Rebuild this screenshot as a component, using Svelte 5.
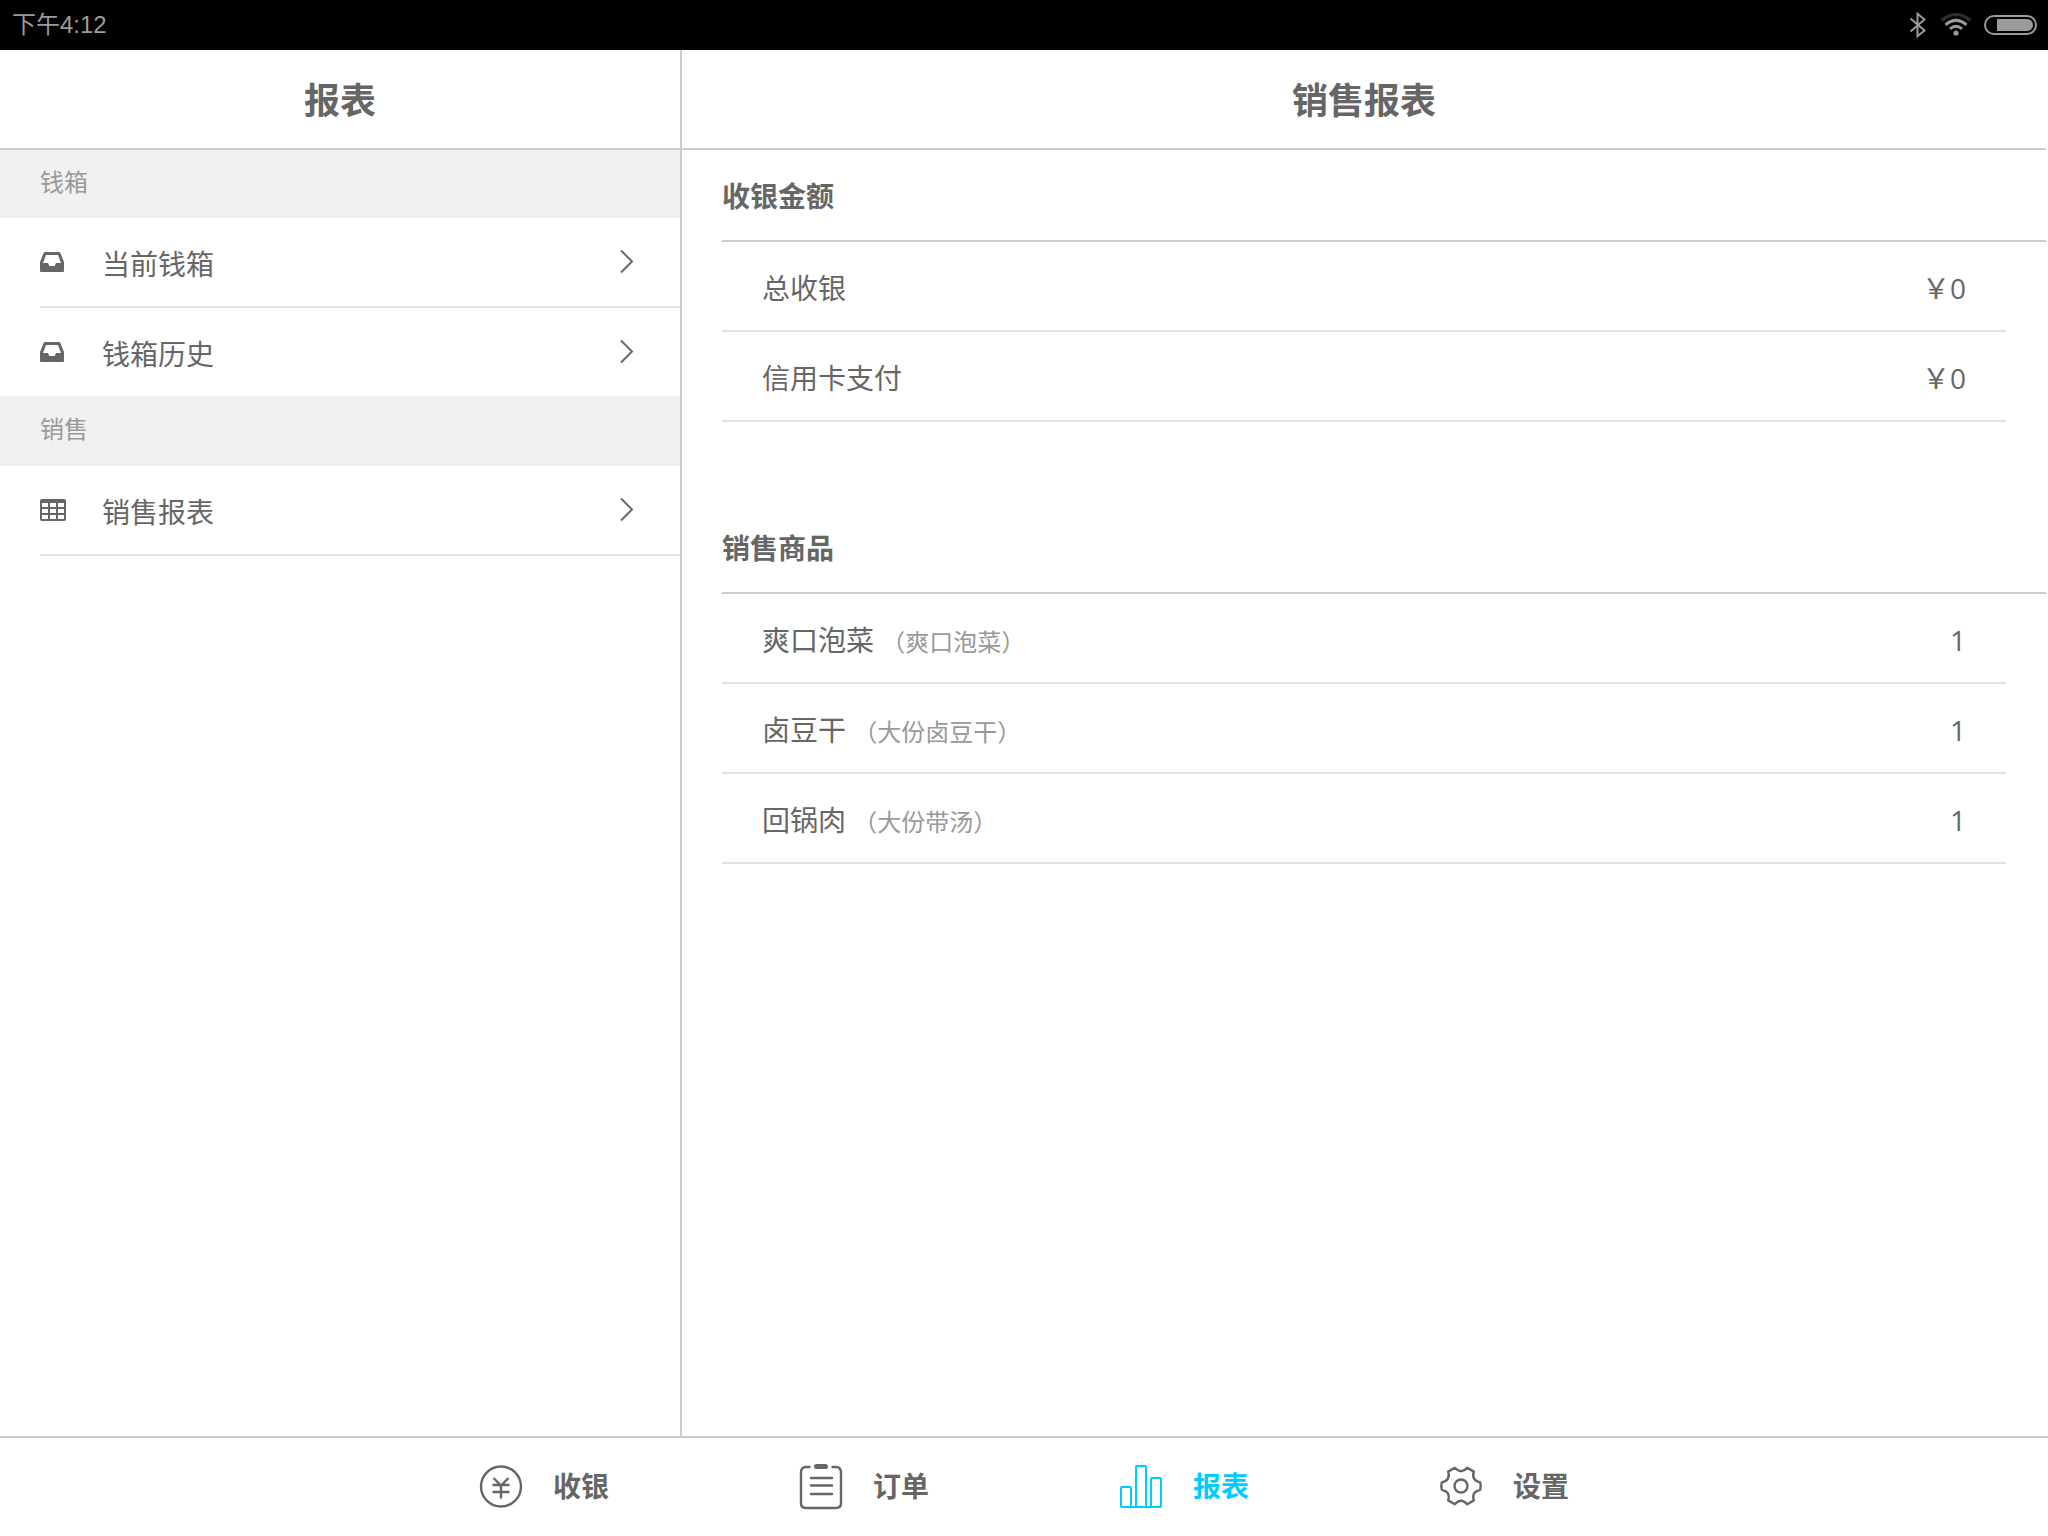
<script>
	let current = 'report';

	const tabs = [
		{ id: 'cashier', label: '收银' },
		{ id: 'order', label: '订单' },
		{ id: 'report', label: '报表' },
		{ id: 'setting', label: '设置' }
	];

	const menu = [
		{
			title: '钱箱',
			items: [
				{ icon: 'inbox', label: '当前钱箱' },
				{ icon: 'inbox', label: '钱箱历史' }
			]
		},
		{
			title: '销售',
			items: [{ icon: 'table', label: '销售报表' }]
		}
	];

	const amounts = [
		{ name: '总收银', value: '￥0' },
		{ name: '信用卡支付', value: '￥0' }
	];

	const goods = [
		{ name: '爽口泡菜', spec: '爽口泡菜', count: 1 },
		{ name: '卤豆干', spec: '大份卤豆干', count: 1 },
		{ name: '回锅肉', spec: '大份带汤', count: 1 }
	];
</script>

<div class="app">
	<div class="status">
		<span class="time">下午4:12</span>
		<svg width="18" height="26" viewBox="0 0 18 26">
			<path d="M1.5 6.5 L15.5 18.5 L8.5 24.2 V1.8 L15.5 7.5 L1.5 19.5" fill="none" stroke="#9b9b9b" stroke-width="2" />
		</svg>
		<svg class="wifi" width="32" height="24" viewBox="0 0 32 24" fill="none" stroke-width="3">
			<path d="M1.5 7.5 Q16 -4.5 30.5 7.5" stroke="#2e2e2e" />
			<path d="M5.5 11.8 Q16 3 26.5 11.8" stroke="#9b9b9b" />
			<path d="M10 16 Q16 10.5 22 16" stroke="#9b9b9b" />
			<circle cx="16" cy="20" r="2.6" fill="#9b9b9b" />
		</svg>
		<svg width="54" height="22" viewBox="0 0 54 22">
			<rect x="1" y="2" width="51" height="18" rx="9" fill="none" stroke="#9b9b9b" stroke-width="2" />
			<path d="M13 5 H43 A6 6 0 0 1 43 17 H13 Z" fill="#9b9b9b" />
		</svg>
	</div>

	<div class="body">
		<aside class="sidebar">
			<h1>报表</h1>
			{#each menu as group}
				<section class="group">
					<h3>{group.title}</h3>
					<ul>
						{#each group.items as item}
							<li>
								<button class="menu-item">
									<span class="menu-icon">
										{#if item.icon === 'inbox'}
											<svg width="24" height="20" viewBox="0 0 24 20">
												<path
													fill="#666"
													fill-rule="evenodd"
													d="M5 0 H19 Q20 0 20.4 1 L23.6 9 Q24 10 24 11 V19 Q24 20 23 20 H1 Q0 20 0 19 V11 Q0 10 .4 9 L3.6 1 Q4 0 5 0 Z M6 3 L3 11 H8 L9.3 14 H14.7 L16 11 H21 L18 3 Z"
												/>
											</svg>
										{:else}
											<svg width="26" height="22" viewBox="0 0 26 22">
												<path
													fill="#666"
													fill-rule="evenodd"
													d="M2 0 H24 Q26 0 26 2 V20 Q26 22 24 22 H2 Q0 22 0 20 V2 Q0 0 2 0 Z M2 4 V8 H8 V4 Z M10 4 V8 H16 V4 Z M18 4 V8 H24 V4 Z M2 10 V14 H8 V10 Z M10 10 V14 H16 V10 Z M18 10 V14 H24 V10 Z M2 16 V20 H8 V16 Z M10 16 V20 H16 V16 Z M18 16 V20 H24 V16 Z"
												/>
											</svg>
										{/if}
									</span>
									<span class="menu-label">{item.label}</span>
									<svg width="14" height="24" viewBox="0 0 14 24">
										<path d="M1 .5 L12 11.5 L1 22.5" fill="none" stroke="#666" stroke-width="2" />
									</svg>
								</button>
							</li>
						{/each}
					</ul>
				</section>
			{/each}
		</aside>

		<main class="content">
			<h1>销售报表</h1>
			<section class="block">
				<h2>收银金额</h2>
				<dl>
					{#each amounts as row}
						<div class="row">
							<dt>{row.name}</dt>
							<dd>{row.value}</dd>
						</div>
					{/each}
				</dl>
			</section>
			<section class="block">
				<h2>销售商品</h2>
				<dl>
					{#each goods as row}
						<div class="row">
							<dt>{row.name} <small>（{row.spec}）</small></dt>
							<dd>{row.count}</dd>
						</div>
					{/each}
				</dl>
			</section>
		</main>
	</div>

	<nav class="tabbar">
		{#each tabs as tab}
			<button class="tab" class:active={current === tab.id} on:click={() => (current = tab.id)}>
				<svg width="44" height="48" viewBox="0 0 44 48" fill="none" stroke="currentColor" stroke-width="2.4">
					{#if tab.id === 'cashier'}
						<circle cx="22" cy="23.5" r="20" />
						<path d="M14.5 15 L22 22.5 L29.5 15 M22 21.5 V35.5 M13.5 22 H30.5 M13.5 29 H30.5" />
					{:else if tab.id === 'order'}
						<path d="M11.5 4 H7 Q2 4 2 9 V40 Q2 45 7 45 H37 Q42 45 42 40 V9 Q42 4 37 4 H32.5" />
						<path d="M17.5 3.5 H26.5" stroke-width="5" stroke-linecap="round" />
						<path d="M12 15 H33 M12 22.5 H33 M12 31 H33" stroke-linecap="round" />
					{:else if tab.id === 'report'}
						<g stroke-width="2">
							<rect x="2" y="24" width="10" height="20" rx="1" />
							<rect x="17" y="3" width="10" height="41" rx="1" />
							<rect x="32" y="15" width="10" height="29" rx="1" />
							<path d="M2 44 H42" />
						</g>
					{:else}
						<circle cx="22" cy="23" r="6.5" />
						<path
							stroke-linejoin="round"
							d="M15.8 4.8 Q22 11.6 28.2 4.8 L34.8 8.6 Q32.2 17.4 41.2 19.4 Q42.2 23 41.2 26.8 Q32.2 28.8 34.8 37.4 L28.2 41.2 Q22 34.4 15.8 41.2 L9.2 37.4 Q11.8 28.8 2.8 26.8 Q1.8 23 2.8 19.4 Q11.8 17.4 9.2 8.6 Z"
						/>
					{/if}
				</svg>
				<span>{tab.label}</span>
			</button>
		{/each}
	</nav>
</div>

<style>
	:global(body) {
		background: #fff;
	}

	.app {
		display: flex;
		flex-direction: column;
		min-height: 100vh;
		color: #666;
		font-family: 'Open Sans', 'Noto Sans CJK SC', sans-serif;
		font-size: 28px;
		line-height: 40px;
	}

	h1,
	h2,
	h3,
	ul,
	dl,
	dd {
		margin: 0;
		padding: 0;
		list-style: none;
	}

	button {
		border: none;
		padding: 0;
		background: none;
		color: inherit;
		font: inherit;
		cursor: pointer;
	}

	svg {
		flex: none;
		display: block;
	}

	.status {
		display: flex;
		align-items: center;
		height: 50px;
		padding: 0 10px 0 12px;
		background: #000;
		color: #9b9b9b;
		font-family: 'Liberation Sans', 'Noto Sans CJK SC', sans-serif;
		font-size: 24px;
	}

	.time {
		flex: 1;
	}

	.wifi {
		margin: 0 12px 0 13px;
	}

	.body {
		flex: 1;
		display: flex;
	}

	.sidebar {
		box-sizing: border-box;
		width: 33.3%;
		border-right: 2px solid #ccc;
	}

	.content {
		flex: 1;
		margin-right: 2px;
	}

	h1 {
		height: 98px;
		border-bottom: 2px solid #ccc;
		font-size: 36px;
		font-weight: 600;
		line-height: 102px;
		text-align: center;
	}

	h3 {
		padding: 0 40px 4px;
		background: #f1f1f1;
		color: #999;
		font-size: 24px;
		font-weight: 400;
		line-height: 66px;
	}

	.group:first-of-type h3 {
		line-height: 64px;
	}

	.group li {
		margin-left: 40px;
		border-bottom: 2px solid #e2e2e2;
	}

	.group:not(:last-child) li:last-child {
		border-bottom: none;
	}

	.menu-item {
		display: flex;
		align-items: center;
		width: 100%;
		height: 88px;
		padding-right: 46px;
		text-align: left;
	}

	.menu-icon {
		width: 62px;
	}

	.menu-label {
		flex: 1;
		padding-top: 4px;
	}

	.block {
		margin-bottom: 80px;
		padding-left: 40px;
	}

	h2 {
		height: 90px;
		border-bottom: 2px solid #ccc;
		font-size: 28px;
		font-weight: 600;
		line-height: 92px;
	}

	.row {
		display: flex;
		justify-content: space-between;
		height: 88px;
		margin-right: 40px;
		padding: 0 40px;
		border-bottom: 2px solid #e2e2e2;
		line-height: 92px;
	}

	small {
		color: #999;
		font-size: 24px;
		line-height: 1;
	}

	.tabbar {
		display: flex;
		justify-content: center;
		height: 98px;
		border-top: 2px solid #ccc;
	}

	.tab {
		display: flex;
		align-items: center;
		justify-content: center;
		gap: 30px;
		width: 320px;
		font-weight: 600;
	}

	.tab span {
		padding-bottom: 2px;
	}

	.tab.active {
		color: #0cf;
	}
</style>
